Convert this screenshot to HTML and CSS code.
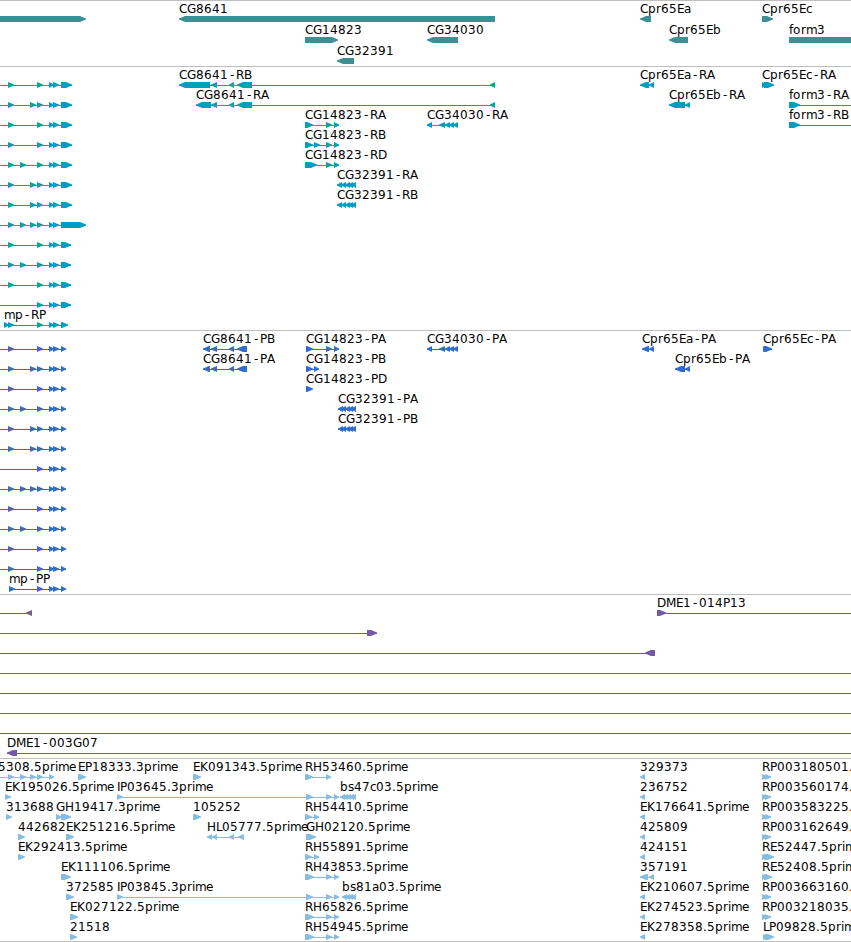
FILE: index.html
```html
<!DOCTYPE html>
<html lang="en">
<head>
  <meta charset="utf-8">
  <title>Genome Browser</title>
  <link rel="stylesheet" href="styles.css">
</head>
<body>
  <div class="browser">
    <div class="track"><svg id="genes" class="gene" width="851" height="65"></svg></div>
    <div class="track"><svg id="transcripts" class="transcript" width="851" height="263"></svg></div>
    <div class="track"><svg id="cds" class="cds" width="851" height="263"></svg></div>
    <div class="track"><svg id="clones" class="clone" width="851" height="163"></svg></div>
    <div class="track"><svg id="ests" class="est" width="851" height="182"></svg></div>
  </div>
  <script src="tracks.js"></script>
</body>
</html>
```

FILE: styles.css
```css
body {
  margin: 0;
  background-color: #fff;
  overflow: hidden;
}
.browser {
  width: 851px;
  display: flex;
  flex-direction: column;
  border-bottom: 1px solid #bebebe;
}
.track {
  border-top: 1px solid #bebebe;
}
.track svg {
  display: block;
  overflow: hidden;
}
.label {
  font-family: "DejaVu Sans", sans-serif;
  font-size: 12px;
  fill: #000;
}
.connector {
  shape-rendering: crispEdges;
}
.gene {
  fill: #3e8e94;
}
.transcript {
  fill: #009fc1;
}
.cds {
  fill: #316dce;
}
.clone {
  fill: #7558a8;
}
.est {
  fill: #87bddf;
}
```

FILE: tracks.js
```javascript
const SVG_NS = 'http://www.w3.org/2000/svg';
const END = 900; // past the right edge of the view

// Whole pixel character widths for the labels, everything else is 8
const WIDTHS = {
  G: 9, H: 9, D: 9, M: 10, E: 7, P: 7, B: 7, I: 3, L: 6,
  a: 7, c: 6, e: 7, f: 4, i: 3, m: 11, r: 5, s: 6, '.': 4
};

// Feature: [row, label, label x, direction, spans, line start, line end]
const genes = [
  [0, '', 0, 1, [[-10, 86]]],
  [0, 'CG8641', 179, -1, [[179, 495]]],
  [1, 'CG14823', 305, 1, [[305, 338]]],
  [1, 'CG34030', 427, -1, [[427, 458]]],
  [2, 'CG32391', 337, -1, [[337, 354]]],
  [0, 'Cpr65Ea', 640, -1, [[640, 651]]],
  [1, 'Cpr65Eb', 669, -1, [[669, 688]]],
  [0, 'Cpr65Ec', 762, 1, [[762, 773]]],
  [1, 'form3', 789, 1, [[789, END]]]
];

// Exons shared by the mp isoforms
const A = [8, 14], B = [20, 26], C = [30, 36], D = [37, 43], E = [49, 54], F = [53, 59];

const mpTranscripts = [
  [A, D, E, F, [61, 72]],
  [A, C, D, E, F, [61, 72]],
  [A, D, E, F, [61, 72]],
  [A, D, E, F, [61, 72]],
  [A, B, D, E, F, [61, 72]],
  [A, C, D, E, F, [61, 72]],
  [A, C, D, E, F, [61, 72]],
  [A, B, C, D, E, F, [61, 86]],
  [A, D, E, F, [61, 71]],
  [A, B, D, E, F, [61, 71]],
  [A, D, E, F, [61, 71]],
  [D, E, F, [61, 71]]
].map((spans, row) => [row, '', 0, 1, spans, 0]);

const mpCds = [
  [A, D, E, F],
  [A, C, D, E, F],
  [A, D, E, F],
  [A, B, D, E, F],
  [A, C, D, E, F],
  [A, C, D, E, F],
  [D, E, F],
  [A, B, C, D, E, F],
  [A, D, E, F],
  [A, B, D, E, F],
  [A, D, E, F],
  [A, D, E, F]
].map((spans, row) => [row, '', 0, 1, spans.concat([[61, 66]]), 0]);

const cg34030 = [[427, 432], [439, 445], [445, 450], [449, 454], [453, 458]];
const cg32391 = [[337, 342], [341, 346], [345, 350], [348, 353], [351, 356]];
const cg32391p = [[338, 343], [341, 346], [345, 350], [348, 353], [351, 356]];

const transcripts = [
  ...mpTranscripts,
  [12, 'mp-RP', 4, 1, [[4, 9], A, D, E, F, [61, 68]]],
  [0, 'CG8641-RB', 179, -1, [[179, 210], [211, 217], [229, 234], [237, 252], [490, 495]]],
  [1, 'CG8641-RA', 196, -1, [[196, 211], [211, 217], [229, 234], [237, 252], [490, 495]]],
  [2, 'CG14823-RA', 305, 1, [[305, 313], [326, 332], [334, 339]]],
  [3, 'CG14823-RB', 305, 1, [[305, 313], [314, 320], [326, 332], [334, 339]]],
  [4, 'CG14823-RD', 305, 1, [[305, 317], [326, 332], [334, 339]]],
  [5, 'CG32391-RA', 337, -1, cg32391],
  [6, 'CG32391-RB', 337, -1, cg32391],
  [2, 'CG34030-RA', 427, -1, cg34030],
  [0, 'Cpr65Ea-RA', 640, -1, [[640, 649], [649, 654]]],
  [1, 'Cpr65Eb-RA', 669, -1, [[669, 685], [685, 690]]],
  [0, 'Cpr65Ec-RA', 762, 1, [[762, 767], [764, 774]]],
  [1, 'form3-RA', 789, 1, [[789, 800]], 789, END],
  [2, 'form3-RB', 789, 1, [[789, 800]], 789, END]
];

const cds = [
  ...mpCds,
  [12, 'mp-PP', 9, 1, [[9, 15], D, E, F, [61, 66]]],
  [0, 'CG8641-PB', 203, -1, [[203, 210], [211, 217], [229, 234], [237, 247]]],
  [1, 'CG8641-PA', 203, -1, [[203, 210], [211, 217], [229, 234], [237, 247]]],
  [0, 'CG14823-PA', 306, 1, [[306, 313], [326, 332], [334, 339]]],
  [1, 'CG14823-PB', 306, 1, [[306, 313], [314, 319]]],
  [2, 'CG14823-PD', 306, 1, [[306, 313]]],
  [3, 'CG32391-PA', 338, -1, cg32391p],
  [4, 'CG32391-PB', 338, -1, cg32391p],
  [0, 'CG34030-PA', 427, -1, cg34030],
  [0, 'Cpr65Ea-PA', 642, -1, [[642, 649], [649, 654]]],
  [1, 'Cpr65Eb-PA', 675, -1, [[675, 685], [685, 690]]],
  [0, 'Cpr65Ec-PA', 763, 1, [[763, 768], [764, 772]]]
];

const clones = [
  [0, '', 0, -1, [[26, 32]], 0, 32],
  [0, 'DME1-014P13', 657, 1, [[657, 666]], 657, END],
  [1, '', 0, 1, [[367, 377]], 0, 377],
  [2, '', 0, -1, [[645, 655]], 0, 655],
  [3, '', 0, 1, [], 0, END],
  [4, '', 0, 1, [], 0, END],
  [5, '', 0, 1, [], 0, END],
  [6, '', 0, 1, [], 0, END],
  [7, 'DME1-003G07', 7, -1, [[7, 17]], 7, END]
];

const G = [[305, 314], [326, 332], [334, 339]];
const H = [[305, 312], [314, 319]];
const ipSpans = [[117, 123], [306, 313], [326, 332], [334, 339]];
const bs47 = [[340, 345], [343, 348], [346, 351], [349, 354], [351, 356]];
const bs81 = [[342, 347], [345, 350], [348, 353], [351, 356]];
const left = [[640, 645]];
const right = [[762, 768], [765, 771]];

const ests = [
  [0, '5308.5prime', -2, 1, [A, B, C, D, [49, 54]], 0],
  [0, 'EP18333.3prime', 78, 1, [[78, 86]]],
  [0, 'EK091343.5prime', 193, 1, [[193, 201]]],
  [0, 'RH53460.5prime', 305, 1, [[305, 313], [326, 331]]],
  [0, '329373', 640, -1, left],
  [0, 'RP003180501.', 762, 1, right],

  [1, 'EK195026.5prime', 5, 1, [[5, 11]]],
  [1, 'IP03645.3prime', 117, 1, ipSpans],
  [1, 'bs47c03.5prime', 340, -1, bs47],
  [1, '236752', 640, -1, left],
  [1, 'RP003560174.', 762, 1, right],

  [2, '313688', 6, 1, [[6, 12]]],
  [2, 'GH19417.3prime', 56, 1, [[56, 62], [61, 71]]],
  [2, '105252', 193, 1, [[193, 201]]],
  [2, 'RH54410.5prime', 305, 1, H],
  [2, 'EK176641.5prime', 640, -1, left],
  [2, 'RP003583225.', 762, 1, right],

  [3, '442682', 18, 1, [[18, 25]]],
  [3, 'EK251216.5prime', 66, 1, [[66, 74]]],
  [3, 'HL05777.5prime', 207, -1, [[207, 212], [212, 217], [229, 234], [238, 244]]],
  [3, 'GH02120.5prime', 306, 1, [[306, 316]]],
  [3, '425809', 640, -1, left],
  [3, 'RP003162649.', 762, 1, right],

  [4, 'EK292413.5prime', 18, 1, [[18, 25]]],
  [4, 'RH55891.5prime', 305, 1, H],
  [4, '424151', 640, -1, left],
  [4, 'RE52447.5prime', 762, 1, [[762, 767], [764, 774]]],

  [5, 'EK111106.5prime', 61, 1, [[61, 71]]],
  [5, 'RH43853.5prime', 305, 1, G],
  [5, '357191', 640, -1, [[640, 648], [649, 654]]],
  [5, 'RE52408.5prime', 762, 1, [[762, 767], [764, 772]]],

  [6, '372585', 66, 1, [[66, 74]]],
  [6, 'IP03845.3prime', 117, 1, ipSpans],
  [6, 'bs81a03.5prime', 342, -1, bs81],
  [6, 'EK210607.5prime', 640, -1, left],
  [6, 'RP003663160.', 762, 1, right],

  [7, 'EK027122.5prime', 70, 1, [[70, 78]]],
  [7, 'RH65826.5prime', 305, 1, G],
  [7, 'EK274523.5prime', 640, -1, left],
  [7, 'RP003218035.', 762, 1, right],

  [8, '21518', 70, 1, [[70, 77]]],
  [8, 'RH54945.5prime', 305, 1, G],
  [8, 'EK278358.5prime', 640, -1, left],
  [8, 'LP09828.5prime', 763, 1, [[763, 768], [765, 774]]]
];

function add(svg, tag, attrs) {
  const el = document.createElementNS(SVG_NS, tag);
  for (const name in attrs) {
    el.setAttribute(name, attrs[name]);
  }
  svg.appendChild(el);
  return el;
}

// Bar with an arrow head on the side of the strand direction,
// short exons are nothing but the head
function arrow(x0, x1, y, dir) {
  const head = Math.min(6, x1 - x0);
  const base = dir > 0 ? x0 : x1;
  const tip = dir > 0 ? x1 : x0;
  const neck = tip - dir * head;
  return `${base},${y} ${neck},${y} ${tip},${y + 2.5} ${tip},${y + 3.5} ${neck},${y + 6} ${base},${y + 6}`;
}

function drawLabel(svg, label, x, y) {
  const xs = [];
  for (const ch of label) {
    // the hyphen glyph is narrow, center it in its cell
    xs.push(ch === '-' ? x + 2 : x);
    x += WIDTHS[ch] || 8;
  }
  add(svg, 'text', { class: 'label', x: xs.join(' '), y: y }).textContent = label;
}

function drawTrack(id, features, rowHeight) {
  const svg = document.getElementById(id);
  for (const [row, label, labelX, dir, spans, start, end] of features) {
    const y = row * rowHeight + 15;
    const from = start !== undefined ? start : spans[0][0];
    const to = end !== undefined ? end : spans[spans.length - 1][1];
    if (start !== undefined || spans.length > 1) {
      add(svg, 'rect', { class: 'connector', x: from, y: y + 3, width: to - from, height: 1 });
    }
    for (const [x0, x1] of spans) {
      add(svg, 'polygon', { points: arrow(x0, x1, y, dir) });
    }
    if (label) {
      drawLabel(svg, label, labelX, y - 3);
    }
  }
}

drawTrack('genes', genes, 21);
drawTrack('transcripts', transcripts, 20);
drawTrack('cds', cds, 20);
drawTrack('clones', clones, 20);
drawTrack('ests', ests, 20);
```
